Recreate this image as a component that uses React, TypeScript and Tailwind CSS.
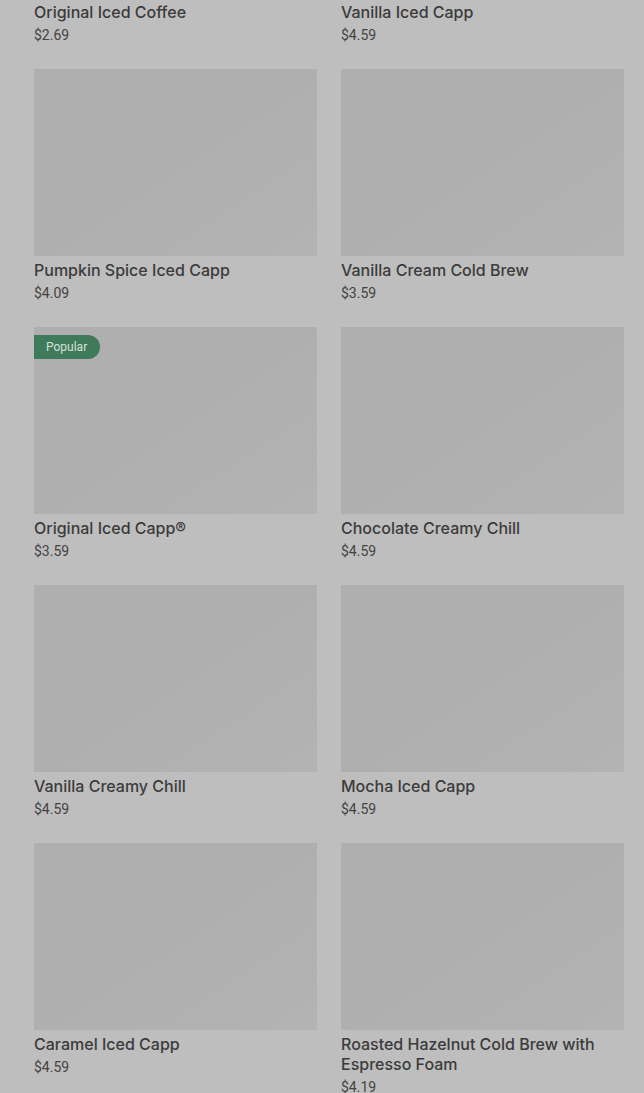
import React from "react";

type Item = { name: string; price: string; popular?: boolean };

const items: Item[] = [
  { name: "Original Iced Coffee", price: "$2.69" },
  { name: "Vanilla Iced Capp", price: "$4.59" },
  { name: "Pumpkin Spice Iced Capp", price: "$4.09" },
  { name: "Vanilla Cream Cold Brew", price: "$3.59" },
  { name: "Original Iced Capp®", price: "$3.59", popular: true },
  { name: "Chocolate Creamy Chill", price: "$4.59" },
  { name: "Vanilla Creamy Chill", price: "$4.59" },
  { name: "Mocha Iced Capp", price: "$4.59" },
  { name: "Caramel Iced Capp", price: "$4.59" },
  { name: "Roasted Hazelnut Cold Brew with Espresso Foam", price: "$4.19" },
  { name: "Iced Latte", price: "$4.19" },
  { name: "Iced Mocha", price: "$4.59" },
];

function Card({ item }: { item: Item }) {
  return (
    <div className="flex flex-col">
      <div className="relative h-[187px] w-full bg-gradient-to-br from-[#afafaf] via-[#afafaf] to-[#b3b3b3]">
        {item.popular && (
          <div className="absolute left-0 top-2 flex h-6 items-center rounded-r-full bg-[#3f7a5b] pl-3 pr-[13px] text-[12px] leading-4 text-[#d4e2da]">
            Popular
          </div>
        )}
      </div>
      <div
        className="mt-1 text-[16px] font-medium leading-5 text-[#3b3b3b]"
        style={{ fontFamily: "Inter, Roboto, sans-serif" }}
      >
        {item.name}
      </div>
      <div className="mt-[3px] text-[14px] leading-5 text-[#434343]">
        {item.price}
      </div>
    </div>
  );
}

export default function App() {
  return (
    <div
      className="h-[1093px] overflow-hidden bg-[#bebebe]"
      style={{ fontFamily: "Roboto, 'Noto Sans', sans-serif" }}
    >
      <div className="-mt-[189px] grid grid-cols-2 gap-x-6 gap-y-6 pl-[34px] pr-[20px]">
        {items.map((it) => (
          <Card key={it.name} item={it} />
        ))}
      </div>
    </div>
  );
}
